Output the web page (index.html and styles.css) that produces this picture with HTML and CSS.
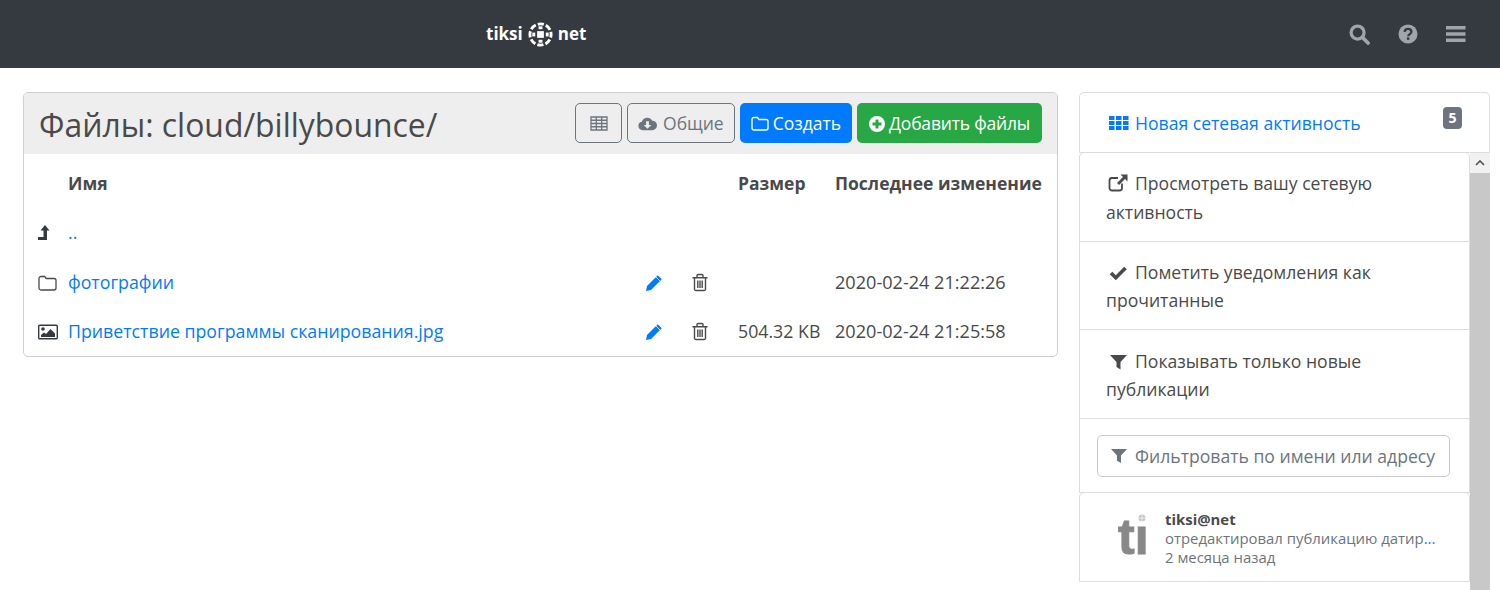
FILE: index.html
```html
<!DOCTYPE html>
<html lang="ru">
<head>
<meta charset="utf-8">
<title>Файлы</title>
<link rel="stylesheet" href="styles.css">
</head>
<body>
<nav class="topbar">
  <div class="brand">
    <span>tiksi</span>
    <svg class="globe" viewBox="0 0 26 26" width="25" height="25"><circle cx="13" cy="13" r="11" fill="none" stroke="#fff" stroke-width="3" stroke-dasharray="6.4 2.24" stroke-dashoffset="3.2"/><rect x="9.500" y="9.500" width="7" height="7" fill="#fff"/><rect x="11" y="4.500" width="4" height="3" fill="#fff"/><rect x="11" y="18.500" width="4" height="3" fill="#fff"/><rect x="4.500" y="11" width="3" height="4" fill="#fff"/><rect x="18.500" y="11" width="3" height="4" fill="#fff"/></svg>
    <span>net</span>
  </div>
  <div class="nav-icons">
    <svg viewBox="0 0 22 22" width="21" height="21"><circle cx="9" cy="9" r="6.800" fill="none" stroke="#a1a5a9" stroke-width="3.400"/><path d="M14 14l6 6" stroke="#a1a5a9" stroke-width="3.800" stroke-linecap="round"/></svg>
    <svg viewBox="0 0 20 20" width="20" height="20"><circle cx="10" cy="10" r="9.500" fill="#a1a5a9"/><path d="M6.600 7.800c.2-1.900 1.600-2.900 3.400-2.900 1.900 0 3.400 1.100 3.400 2.800 0 2.400-3.200 2.400-3.200 4.500" fill="none" stroke="#343a40" stroke-width="2.300"/><rect x="8.900" y="13.400" width="2.500" height="2.400" fill="#343a40"/></svg>
    <svg viewBox="0 0 20 16" width="20" height="16"><path d="M0 0h19.500v3.400H0zM0 6.300h19.500v3.400H0zM0 12.600h19.500V16H0z" fill="#a1a5a9"/></svg>
  </div>
</nav>

<div class="layout">
  <main class="files">
    <header class="files-head">
      <h1>Файлы: cloud/billybounce/</h1>
      <div class="actions">
        <button class="btn btn-outline btn-square"><svg viewBox="0 0 18 15" width="18" height="15"><path d="M1 1h16v13H1zM1 4.250h16M1 7.500h16M1 10.750h16M6.300 1V14M11.700 1V14" fill="none" stroke="#6c757d" stroke-width="1.300"/></svg></button>
        <button class="btn btn-outline btn-shared"><svg viewBox="0 0 20 15" width="19" height="15"><path d="M5 14.500a4.500 4.500 0 0 1-1-8.900A6 6 0 0 1 15 4.500a5 5 0 0 1 0 10z" fill="#6c757d"/><path d="M8.500 5h3v4h2.500L10 13 6 9h2.500z" fill="#eee"/></svg>Общие</button>
        <button class="btn btn-blue"><svg viewBox="0 0 18 15" width="18" height="15"><path d="M3 1.500h3.500l1.500 2h7a2 2 0 0 1 2 2v6.500a2 2 0 0 1-2 2H3a2 2 0 0 1-2-2V3.500a2 2 0 0 1 2-2z" fill="none" stroke="#fff" stroke-width="1.400"/></svg>Создать</button>
        <button class="btn btn-green"><svg viewBox="0 0 16 16" width="16" height="16"><circle cx="8" cy="8" r="8" fill="#fff"/><path d="M3.500 6.500h3v-3h3v3h3v3h-3v3h-3v-3h-3z" fill="#28a745"/></svg>Добавить файлы</button>
      </div>
    </header>
    <table class="file-table">
      <thead>
        <tr><th class="c-icon"></th><th class="c-name">Имя</th><th class="c-act"></th><th class="c-act"></th><th class="c-size">Размер</th><th class="c-date">Последнее изменение</th></tr>
      </thead>
      <tbody>
        <tr class="row-up">
          <td class="c-icon"><svg viewBox="0 0 12 16" width="12" height="16"><path d="M7 0l4.500 5.500H9V15H0v-3h5.500V5.500H2.500z" fill="#343a40"/></svg></td>
          <td class="c-name"><a href="#">..</a></td><td></td><td></td><td></td><td></td>
        </tr>
        <tr>
          <td class="c-icon"><svg viewBox="0 0 19 16" width="19" height="16"><path d="M3 1.500h3.700l1.500 2H16a2 2 0 0 1 2 2V13a2 2 0 0 1-2 2H3a2 2 0 0 1-2-2V3.500a2 2 0 0 1 2-2z" fill="none" stroke="#4a4a4a" stroke-width="1.300"/></svg></td>
          <td class="c-name"><a href="#">фотографии</a></td>
          <td class="c-act"><svg viewBox="0 0 18 18" width="18" height="18"><path d="M12.800 1.200l4 4L6 16l-5 1 1-5z" fill="#007bff"/><path d="M11 3l4 4" stroke="#fff" stroke-width=".8"/></svg></td>
          <td class="c-act"><svg viewBox="0 0 16 18" width="16" height="19"><path d="M2.500 5v11a1.500 1.500 0 0 0 1.500 1h8a1.500 1.500 0 0 0 1.500-1V5M.5 4.200h15M5 4V2a1 1 0 0 1 1-1h4a1 1 0 0 1 1 1v2M5.800 7v7.500M8 7v7.500M10.200 7v7.500" fill="none" stroke="#4a4a4a" stroke-width="1.400"/></svg></td>
          <td></td>
          <td class="c-date">2020-02-24 21:22:26</td>
        </tr>
        <tr>
          <td class="c-icon"><svg viewBox="0 0 20 16" width="20" height="16"><rect x=".7" y="1.200" width="18.600" height="13.600" rx="1" fill="none" stroke="#343a40" stroke-width="1.400"/><circle cx="5" cy="5" r="1.800" fill="#343a40"/><path d="M3 13v-2l3-2.500 2 1.500 4.500-5 4.500 4.500V13z" fill="#343a40"/></svg></td>
          <td class="c-name"><a href="#">Приветствие программы сканирования.jpg</a></td>
          <td class="c-act"><svg viewBox="0 0 18 18" width="18" height="18"><path d="M12.800 1.200l4 4L6 16l-5 1 1-5z" fill="#007bff"/><path d="M11 3l4 4" stroke="#fff" stroke-width=".8"/></svg></td>
          <td class="c-act"><svg viewBox="0 0 16 18" width="16" height="19"><path d="M2.500 5v11a1.500 1.500 0 0 0 1.500 1h8a1.500 1.500 0 0 0 1.500-1V5M.5 4.200h15M5 4V2a1 1 0 0 1 1-1h4a1 1 0 0 1 1 1v2M5.800 7v7.500M8 7v7.500M10.200 7v7.500" fill="none" stroke="#4a4a4a" stroke-width="1.400"/></svg></td>
          <td class="c-size">504.32 KB</td>
          <td class="c-date">2020-02-24 21:25:58</td>
        </tr>
      </tbody>
    </table>
  </main>

  <aside class="side">
    <div class="side-head">
      <a href="#" class="side-title"><svg viewBox="0 0 20 16" width="20" height="16"><path d="M0 1h5.500v4H0zM7 1h5.500v4H7zM14 1h5.500v4H14zM0 6h5.500v4H0zM7 6h5.500v4H7zM14 6h5.500v4H14zM0 11h5.500v4H0zM7 11h5.500v4H7zM14 11h5.500v4H14z" fill="#007bff"/></svg>Новая сетевая активность</a>
      <span class="badge">5</span>
    </div>
    <div class="side-body">
      <div class="side-list">
        <div class="item"><svg viewBox="0 0 20 18" width="20" height="18"><path d="M14 9.500V14a2.500 2.500 0 0 1-2.500 2.500H4A2.500 2.500 0 0 1 1.500 14V6.500A2.500 2.500 0 0 1 4 4h6" fill="none" stroke="#4a4a4a" stroke-width="1.800"/><path d="M12.500.5h7v7l-2.500-2.500-6 6-2-2 6-6z" fill="#4a4a4a"/></svg>Просмотреть вашу сетевую активность</div>
        <div class="item"><svg viewBox="0 0 20 16" width="20" height="16"><path d="M3 8l4.800 4.800L17.500 3" fill="none" stroke="#4a4a4a" stroke-width="3.600"/></svg>Пометить уведомления как прочитанные</div>
        <div class="item"><svg viewBox="0 0 20 16" width="20" height="16"><path d="M2 1h17l-6.500 7v7.500l-4-2.500V8z" fill="#4a4a4a"/></svg>Показывать только новые публикации</div>
        <div class="item item-filter">
          <button class="filter-btn"><svg viewBox="0 0 16 16" width="16" height="16"><path d="M0 1h16l-6 6.500V15l-4-2.300V7.500z" fill="#6c757d"/></svg>Фильтровать по имени или адресу</button>
        </div>
        <div class="entry">
          <div class="avatar"><span class="avatar-text">ti</span><svg class="avatar-dot" viewBox="0 0 12 12" width="12" height="12"><rect width="12" height="12" fill="#fff"/><circle cx="6" cy="6" r="3.500" fill="#c4c4c4"/><path d="M6 2v8M2 6h8" stroke="#fff" stroke-width=".7"/></svg></div>
          <div class="entry-text">
            <strong>tiksi@net</strong>
            <span>отредактировал публикацию датир<span class="more">...</span></span>
            <span>2 месяца назад</span>
          </div>
        </div>
      </div>
      <div class="scrollbar">
        <div class="scroll-btn"><svg viewBox="0 0 10 6" width="10" height="6"><path d="M1 5l4-4 4 4" fill="none" stroke="#505050" stroke-width="1.600"/></svg></div>
        <div class="scroll-thumb"></div>
      </div>
    </div>
  </aside>
</div>
</body>
</html>
```
FILE: styles.css
```css
* { box-sizing: border-box; }
html, body { height: 100%; }
body {
  margin: 0;
  height: 590px;
  overflow: hidden;
  background: #fff;
  color: #4a4a4a;
  font-family: "Open Sans", "Noto Sans", sans-serif;
  font-size: 17.6px;
  line-height: 28.5px;
}
a { color: #007bff; text-decoration: none; }

.topbar {
  height: 68px;
  background: #343a40;
  display: flex;
  align-items: center;
  padding-left: 486px;
  padding-right: 34px;
  justify-content: space-between;
}
.brand {
  display: flex;
  align-items: center;
  gap: 5px;
  color: #fff;
  font-weight: 700;
  font-size: 17px;
}
.globe { display: block; }
.nav-icons { display: flex; align-items: center; gap: 28px; }
.nav-icons svg { display: block; }

.layout {
  display: flex;
  align-items: flex-start;
  padding: 24px 10px 0 23px;
  gap: 21px;
}

.files {
  width: 1035px;
  flex: none;
  border: 1px solid #cfcfcf;
  border-radius: 5px;
  overflow: hidden;
}
.files-head {
  height: 61px;
  background: #eee;
  display: flex;
  align-items: center;
  justify-content: space-between;
  padding: 0 15px 1px;
}
.files-head h1 {
  margin: 3px 0 0;
  font-weight: 400;
  font-size: 31.9px;
  line-height: 40px;
  color: #4a4a4a;
}
.actions { display: flex; gap: 5px; }
.btn {
  height: 40px;
  border-radius: 5px;
  border: 1px solid transparent;
  font: inherit;
  font-size: 17.5px;
  padding: 1px 10px 0;
  display: flex;
  align-items: center;
  gap: 4px;
  white-space: nowrap;
}
.btn-outline { background: transparent; border-color: #6c757d; color: #6c757d; }
.btn-square { width: 47px; justify-content: center; padding: 0; }
.btn-shared { gap: 6px; }
.btn-blue { background: #007bff; color: #fff; }
.btn-green { background: #28a745; color: #fff; padding: 1px 11px 0; letter-spacing: -.2px; }

.file-table {
  width: 100%;
  border-collapse: collapse;
  table-layout: fixed;
  font-size: 17.75px;
}
.file-table th, .file-table td {
  height: 49px;
  padding: 0;
  text-align: left;
  vertical-align: middle;
  white-space: nowrap;
}
.file-table th { font-weight: 700; font-size: 17.5px; height: 54px; padding-top: 4px; }
.file-table .row-up td { height: 50px; padding-bottom: 1px; }
.file-table svg { display: block; }
.c-icon { width: 44px; padding-left: 14px !important; }
.c-name { width: 563.5px; }
.c-act { width: 46.5px; }
.c-act svg { margin-left: 13px; }
.c-act + .c-act svg { margin-left: 14px; }
.file-table .c-size { width: 110.5px; padding-left: 13.5px; }
.c-date { width: auto; }
td.c-date { font-size: 18.1px; }

.side { width: 411px; flex: none; }
.side-head {
  height: 61px;
  border: 1px solid #ddd;
  border-radius: 5px 5px 0 0;
  display: flex;
  align-items: center;
  justify-content: space-between;
  padding: 0 27px 0 29px;
}
.side-title { display: flex; align-items: center; gap: 6px; margin-top: 1px; }
.badge {
  width: 19px;
  height: 22px;
  margin-top: -9px;
  background: #6c757d;
  border-radius: 4px;
  color: #fff;
  font-size: 14px;
  font-weight: 700;
  line-height: 22px;
  text-align: center;
}
.side-body { display: flex; height: 440px; }
.side-list { width: 391px; flex: none; }
.item {
  border: 1px solid #ddd;
  border-top: 0;
  padding: 15.5px 26px 0;
  height: 88px;
}
.item svg { display: inline-block; vertical-align: -2px; margin-right: 7px; margin-left: 2px; }
.side-list .item:first-child { border-radius: 5px 5px 0 0; border-top: 1px solid #ddd; margin-top: -1px; height: 90px; padding-top: 16px; }
.side-list .item:nth-child(3) { height: 89px; padding-top: 16.5px; }
.side-list .item-filter { padding: 16px 17px 0; height: 74px; }
.filter-btn {
  width: 353px;
  height: 42px;
  padding: 0 0 0 13px;
  background: #fff;
  border: 1px solid #ccc;
  border-radius: 5px;
  color: #6c757d;
  font: inherit;
  display: flex;
  align-items: center;
  white-space: nowrap;
}
.filter-btn svg { margin: 0 8px 0 0; flex: none; }
.entry {
  display: flex;
  height: 90px;
  border: 1px solid #ddd;
  border-radius: 5px 5px 0 0;
  padding: 16px 0 0 38px;
  margin-top: -1px;
}
.avatar { width: 47px; flex: none; position: relative; color: #888; }
.avatar-text {
  display: block;
  font-family: "Liberation Sans", sans-serif;
  font-weight: 700;
  font-size: 50px;
  line-height: 56px;
  -webkit-text-stroke: 1px #888;
}
.avatar-dot { position: absolute; left: 18px; top: 3px; }
.entry-text { display: flex; flex-direction: column; font-size: 14.9px; line-height: 19px; color: #6c757d; padding-top: .5px; }
.entry-text strong { color: #4a4a4a; font-weight: 700; }
.more { color: #007bff; }

.scrollbar {
  width: 20px;
  flex: none;
  display: flex;
  flex-direction: column;
}
.scroll-btn {
  height: 20px;
  background: #f1f1f1;
  display: flex;
  align-items: center;
  justify-content: center;
}
.scroll-thumb { flex: 1; background: #c8c8c8; }
```
